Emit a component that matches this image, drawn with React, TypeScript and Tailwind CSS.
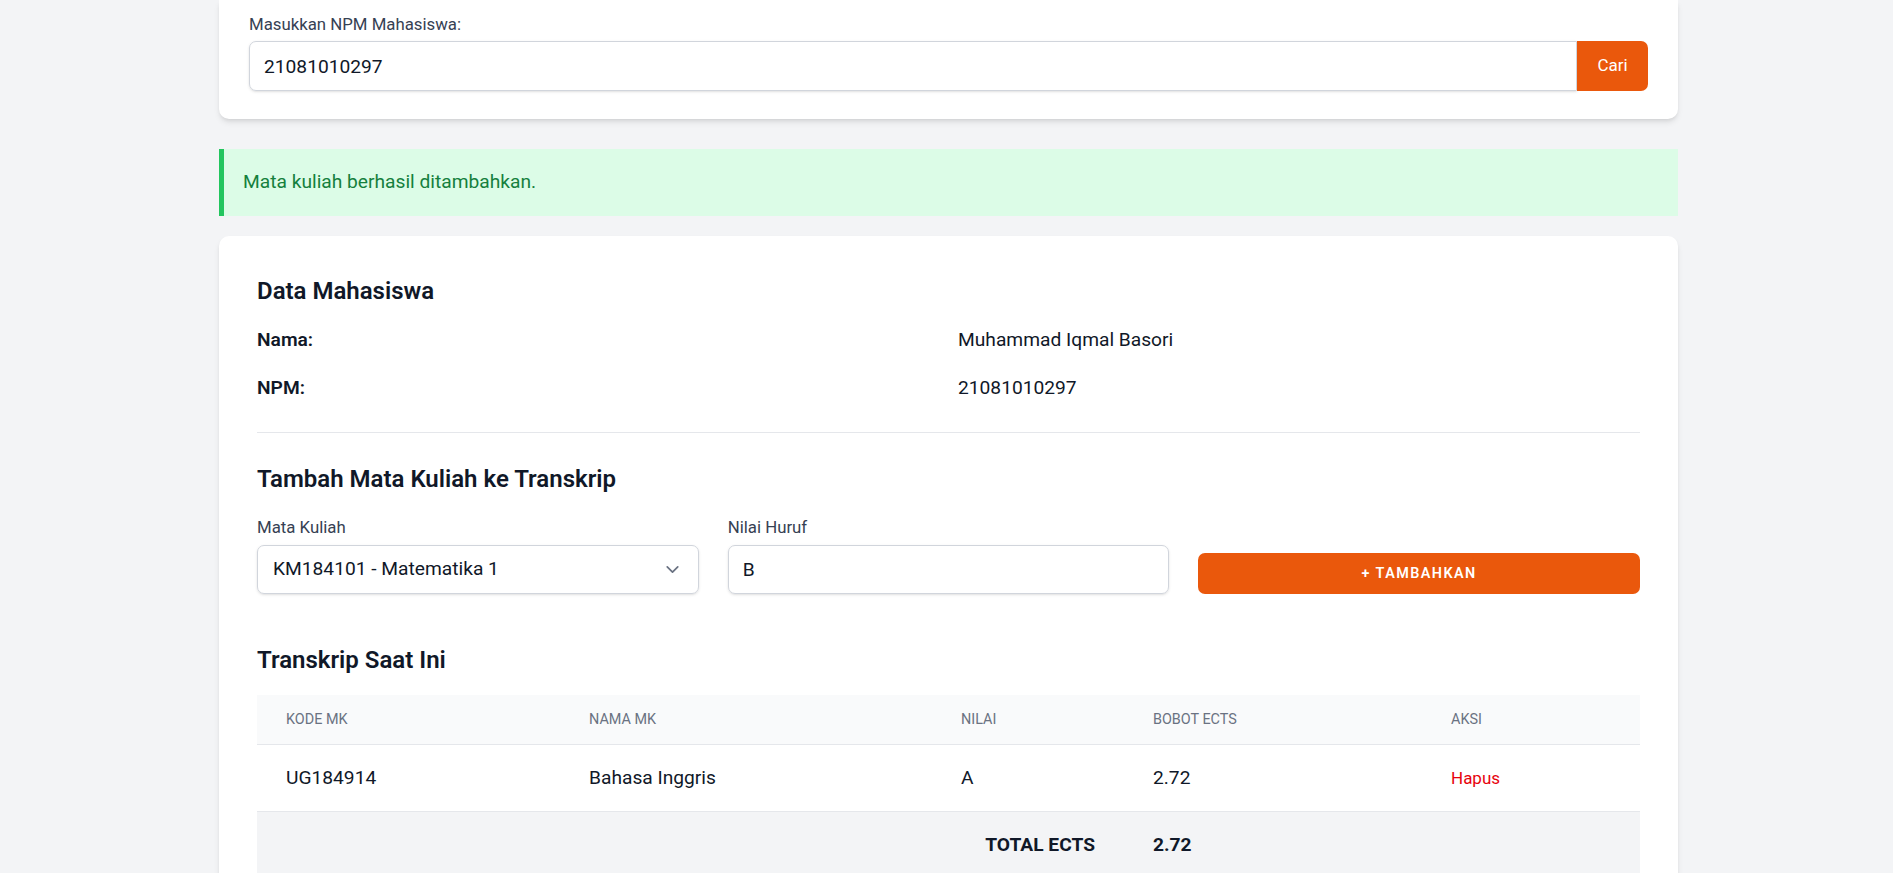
import { ChevronDown } from "lucide-react";

const rows = [{ kode: "UG184914", nama: "Bahasa Inggris", nilai: "A", bobot: "2.72" }];

export default function App() {
  return (
    <div className="min-h-screen bg-gray-100 text-gray-900 font-['Roboto',sans-serif]">
      <div className="ml-[219px] w-[1459px]">
        {/* Search card */}
        <div className="bg-white rounded-b-[10px] shadow-md px-[30px] pt-[12px] pb-[28px]">
          <label className="block text-[16.8px] leading-[24px] text-gray-700 mb-[5px]">Masukkan NPM Mahasiswa:</label>
          <div className="flex">
            <input
              readOnly
              value="21081010297"
              className="flex-1 h-[50px] border border-gray-300 rounded-l-[7px] px-[14px] text-[19.2px] text-gray-900 shadow-sm outline-none"
            />
            <button className="w-[71px] h-[50px] bg-[#ea580c] text-white text-[17px] rounded-r-[7px]">Cari</button>
          </div>
        </div>

        {/* Alert */}
        <div className="mt-[30px] h-[67px] flex items-center bg-[#dcfce7] border-l-[5px] border-[#22c55e] pl-[19px] text-[19.2px] text-[#15803d]">
          Mata kuliah berhasil ditambahkan.
        </div>

        {/* Main card */}
        <div className="mt-[20px] bg-white rounded-[10px] shadow-md px-[38px] pt-[39px] pb-[40px]">
          <h2 className="text-[24px] leading-[32px] font-semibold mb-[19px]">Data Mahasiswa</h2>
          <div className="grid grid-cols-2 gap-x-[19px] gap-y-[20px] text-[19.2px] leading-[28px]">
            <div className="font-semibold">Nama:</div>
            <div>Muhammad Iqmal Basori</div>
            <div className="font-semibold">NPM:</div>
            <div>21081010297</div>
          </div>

          <hr className="mt-[30px] mb-[30px] border-gray-200" />

          <h2 className="text-[24px] leading-[32px] font-semibold mb-[20px]">Tambah Mata Kuliah ke Transkrip</h2>
          <div className="grid grid-cols-3 gap-x-[29px] items-end">
            <div>
              <label className="block text-[16.8px] leading-[24px] text-gray-700 mb-[6px]">Mata Kuliah</label>
              <div className="h-[49px] flex items-center justify-between border border-gray-300 rounded-[7px] shadow-sm pl-[15px] pr-[15px] text-[19.2px]">
                <span>KM184101 - Matematika 1</span>
                <ChevronDown className="w-[21px] h-[21px] text-gray-500" strokeWidth={2} />
              </div>
            </div>
            <div>
              <label className="block text-[16.8px] leading-[24px] text-gray-700 mb-[6px]">Nilai Huruf</label>
              <input
                readOnly
                value="B"
                className="w-full h-[49px] border border-gray-300 rounded-[7px] shadow-sm px-[14px] text-[19.2px] outline-none"
              />
            </div>
            <button className="h-[41px] bg-[#ea580c] text-white rounded-[7px] text-[14.4px] font-semibold tracking-[0.1em]">
              + TAMBAHKAN
            </button>
          </div>

          <h2 className="mt-[50px] text-[24px] leading-[32px] font-semibold mb-[19px]">Transkrip Saat Ini</h2>
          <table className="w-full table-fixed border-collapse">
            <colgroup>
              <col className="w-[303px]" />
              <col className="w-[372px]" />
              <col className="w-[192px]" />
              <col className="w-[298px]" />
              <col />
            </colgroup>
            <thead className="bg-gray-50">
              <tr className="border-b border-gray-200">
                {["Kode MK", "Nama MK", "Nilai", "Bobot ECTS", "Aksi"].map((h) => (
                  <th
                    key={h}
                    className="px-[29px] py-[16px] text-left text-[14.4px] leading-[17px] font-normal uppercase text-gray-500"
                  >
                    {h}
                  </th>
                ))}
              </tr>
            </thead>
            <tbody>
              {rows.map((r) => (
                <tr key={r.kode} className="border-b border-gray-200 text-[19.2px] leading-[28px]">
                  <td className="px-[29px] py-[19px]">{r.kode}</td>
                  <td className="px-[29px] py-[19px]">{r.nama}</td>
                  <td className="px-[29px] py-[19px]">{r.nilai}</td>
                  <td className="px-[29px] py-[19px]">{r.bobot}</td>
                  <td className="px-[29px] py-[19px] text-[17px] text-red-600">Hapus</td>
                </tr>
              ))}
            </tbody>
            <tfoot className="bg-gray-100">
              <tr className="text-[19.2px] leading-[28px] font-bold">
                <td colSpan={3} className="px-[29px] py-[19px] text-right">TOTAL ECTS</td>
                <td className="px-[29px] py-[19px]">2.72</td>
                <td />
              </tr>
            </tfoot>
          </table>
        </div>
      </div>
    </div>
  );
}
